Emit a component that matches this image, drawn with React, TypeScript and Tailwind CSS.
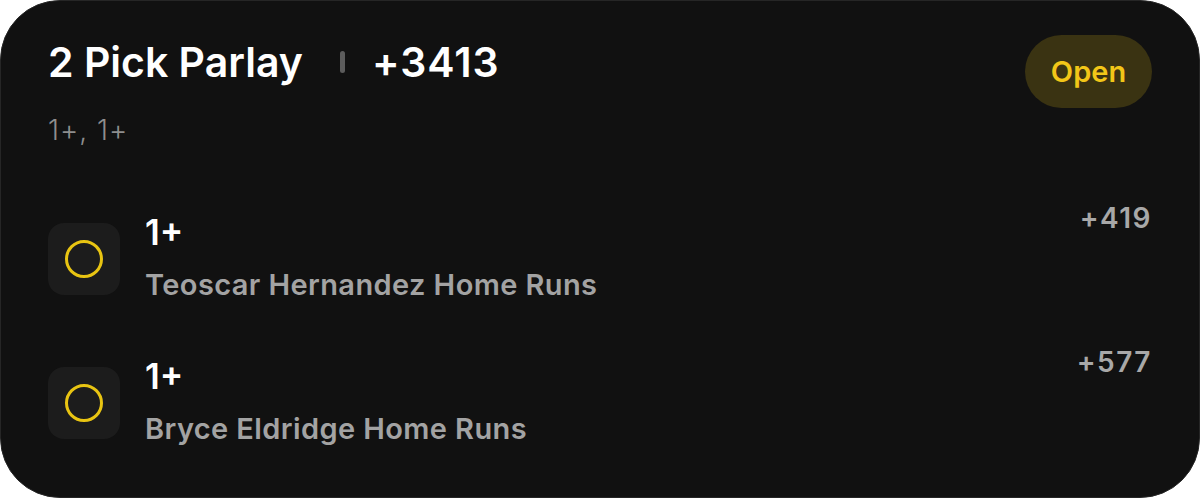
import { FC } from 'react'

interface Leg {
  line: string
  player: string
  odds: string
}

const legs: Leg[] = [
  { line: '1+', player: 'Teoscar Hernandez Home Runs', odds: '+419' },
  { line: '1+', player: 'Bryce Eldridge Home Runs', odds: '+577' },
]

const StatusRing: FC = () => (
  <div className="mt-[4px] flex h-[72px] w-[72px] shrink-0 items-center justify-center rounded-[16px] bg-[#1c1c1c]">
    <svg width="40" height="40" viewBox="0 0 40 40">
      <circle cx="20" cy="20" r="17.5" fill="none" stroke="#e8c412" strokeWidth="3" />
    </svg>
  </div>
)

const LegRow: FC<{ leg: Leg }> = ({ leg }) => (
  <div className="flex items-start justify-between">
    <div className="mt-[10px] flex items-center gap-[25px]">
      <StatusRing />
      <div className="flex flex-col gap-[14px]">
        <span className="text-[35px] font-semibold leading-[42px] text-white">{leg.line}</span>
        <span className="text-[29px] font-semibold leading-[35px] tracking-[0.4px] text-[#a3a3a3]">
          {leg.player}
        </span>
      </div>
    </div>
    <span className="text-[28px] font-semibold leading-[34px] tracking-[1.5px] text-[#a8a8a8]">{leg.odds}</span>
  </div>
)

export default function App() {
  return (
    <div className="h-[498px] w-[1200px] bg-white font-['Inter',sans-serif]">
      <div className="h-full rounded-[60px] border border-[#262626] bg-[#111111] px-[47px] pt-[34px]">
        <div className="flex items-start justify-between">
          <div>
            <div className="mt-[2px] flex items-center">
              <h1 className="text-[41px] font-semibold leading-[50px] text-white">2 Pick Parlay</h1>
              <span className="ml-[37px] mr-[27px] h-[22px] w-[5px] rounded-full bg-[#5c5c5c]" />
              <span className="text-[41px] font-semibold leading-[50px] tracking-[1px] text-white">+3413</span>
            </div>
            <p className="mt-[26px] text-[28px] font-light leading-[34px] tracking-[1px] text-[#8e8e8e]">1+, 1+</p>
          </div>
          <span className="flex h-[73px] w-[127px] items-center justify-center rounded-full bg-[#3a3312] text-[29px] font-semibold text-[#f2c618]">
            Open
          </span>
        </div>
        <div className="mt-[54px] flex flex-col gap-[43px]">
          {legs.map((leg) => (
            <LegRow key={leg.player} leg={leg} />
          ))}
        </div>
      </div>
    </div>
  )
}
